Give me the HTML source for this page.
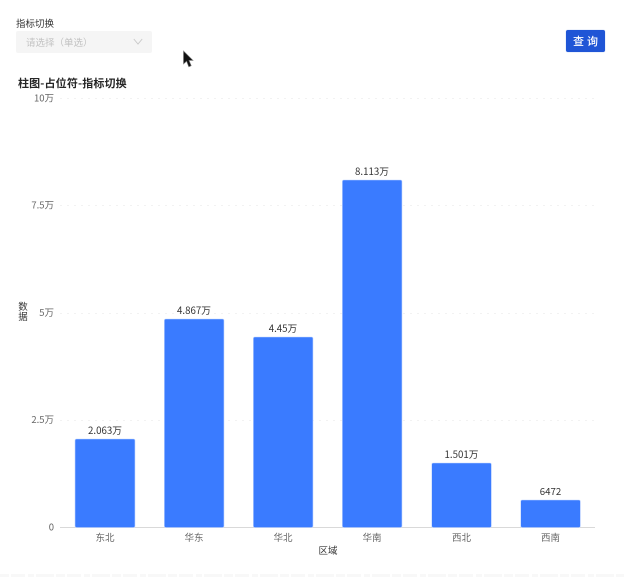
<!DOCTYPE html>
<html>
<head>
<meta charset="utf-8">
<style>
html,body{margin:0;padding:0;background:#fff;}
body{width:624px;height:578px;overflow:hidden;position:relative;font-family:"Noto Sans CJK SC","Liberation Sans",sans-serif;}
.a{position:absolute;white-space:nowrap;}
</style>
</head>
<body>
<div class="a" style="left:16px;top:15.500px;font-size:9.500px;line-height:14px;color:#333;">指标切换</div>
<div class="a" style="left:16px;top:31px;width:136px;height:22px;background:#f5f5f5;border-radius:2px;"></div>
<div class="a" style="left:26px;top:35px;font-size:9.500px;line-height:14px;color:#c2c2c2;">请选择（单选）</div>
<svg class="a" style="left:133px;top:38px;" width="10" height="8" viewBox="0 0 10 8"><path d="M.8 1 5 6 9.200 1" fill="none" stroke="#c8c8c8" stroke-width=".9"/></svg>
<div class="a" style="left:566px;top:30px;width:39px;height:22px;background:#1f55d6;border-radius:2px;box-shadow:0 0 1px #8fa9ea;color:#fff;font-size:11px;font-weight:500;line-height:22px;text-align:center;letter-spacing:3px;text-indent:3px;">查询</div>
<svg class="a" style="left:182px;top:50px;" width="13" height="19" viewBox="0 0 13 19"><path d="M1.500 1 V14 L4.600 11.200 L6.800 16.800 L9.200 15.700 L7 10.400 H11 Z" fill="#111" stroke="#777" stroke-width=".6"/></svg>
<div class="a" style="left:18px;top:75px;font-size:11px;line-height:16px;font-weight:700;letter-spacing:.15px;color:#262626;">柱图-占位符-指标切换</div>
<svg class="a" style="left:0;top:0;" width="624" height="578" viewBox="0 0 624 578" font-family="'Noto Sans CJK SC','Liberation Sans',sans-serif">
<g stroke="#f2f2f2" stroke-width="1" stroke-dasharray="2 5">
<path d="M60 98.500H595M60 205.500H595M60 313.500H595M60 420.500H595"/>
</g>
<path d="M0 575.500H624" stroke="#f8f8f8" stroke-width="3" stroke-dasharray="9 2 14 3 6 2 18 2"/>
<path d="M60 527.500H595" stroke="#d9d9d9" stroke-width="1"/>
<g fill="#3a7bff" stroke="#c4d8ff" stroke-width=".6">
<rect x="75" y="439" width="60" height="88.500" rx="1.500"/>
<rect x="164.300" y="319" width="59.700" height="208.500" rx="1.500"/>
<rect x="253.300" y="337" width="59.700" height="190.500" rx="1.500"/>
<rect x="342.300" y="180" width="59.700" height="347.500" rx="1.500"/>
<rect x="431.700" y="463" width="59.700" height="64.500" rx="1.500"/>
<rect x="520.700" y="500" width="59.700" height="27.500" rx="1.500"/>
</g>
<g font-size="9.500" fill="#666" text-anchor="end">
<text x="54" y="101.500">10万</text>
<text x="54" y="208.500">7.5万</text>
<text x="54" y="316">5万</text>
<text x="54" y="423">2.5万</text>
<text x="54" y="530.500">0</text>
</g>
<g font-size="9.700" fill="#333" text-anchor="middle">
<text x="105" y="434">2.063万</text>
<text x="194" y="314">4.867万</text>
<text x="283" y="332">4.45万</text>
<text x="372" y="175">8.113万</text>
<text x="461.500" y="458">1.501万</text>
<text x="550.500" y="495">6472</text>
</g>
<g font-size="9.500" fill="#666" text-anchor="middle">
<text x="105" y="541">东北</text>
<text x="194" y="541">华东</text>
<text x="283" y="541">华北</text>
<text x="372" y="541">华南</text>
<text x="461.500" y="541">西北</text>
<text x="550.500" y="541">西南</text>
</g>
<text x="328" y="554" font-size="9.500" fill="#333" text-anchor="middle">区域</text>
<text x="23" y="310" font-size="9.500" fill="#333" text-anchor="middle">数</text>
<text x="23" y="320" font-size="9.500" fill="#333" text-anchor="middle">据</text>
</svg>
</body>
</html>
